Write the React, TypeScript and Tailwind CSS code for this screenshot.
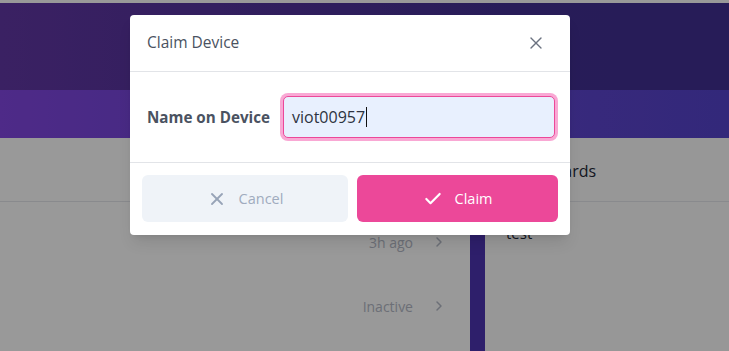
import { X, Check, ChevronRight } from "lucide-react";

function Backdrop() {
  return (
    <div className="flex flex-col w-full h-full bg-[#4d34b2]">
      <div className="h-[3px] bg-white" />
      <div className="h-[87px] bg-[linear-gradient(90deg,#6237a5_0%,#55349e_30%,#433093_70%,#413093_100%)]" />
      <div className="h-[48px] bg-[linear-gradient(90deg,#8246e3_0%,#6e47d6_40%,#5544cc_100%)]" />
      <div className="flex flex-1 gap-[15px]">
        <div className="w-[470px] bg-white flex flex-col">
          <div className="h-[64px] border-b border-[#e5e7eb]" />
          <div className="flex items-center justify-end h-[80px] pr-[23px] gap-[18px] text-[14px] text-[#b4b9c6]">
            <span>3h ago</span>
            <ChevronRight size={16} strokeWidth={2.2} />
          </div>
          <div className="flex items-center justify-end h-[48px] pr-[23px] gap-[18px] text-[14px] text-[#b4b9c6]">
            <span>Inactive</span>
            <ChevronRight size={16} strokeWidth={2.2} />
          </div>
        </div>
        <div className="flex-1 bg-[#fcfcfc] flex flex-col">
          <div className="h-[64px] border-b border-[#e5e7eb] flex items-center pl-[21px] text-[16px] text-[#1f2937] pt-[3px]">
            Dashboards
          </div>
          <div className="pl-[21px] pt-[20px] text-[15px] text-[#1f2937]">test</div>
        </div>
      </div>
    </div>
  );
}

export default function App() {
  return (
    <div
      className="relative w-[729px] h-[351px] overflow-hidden"
      style={{ fontFamily: '"Open Sans", "Noto Sans", sans-serif' }}
    >
      <Backdrop />
      <div className="absolute inset-0 bg-black/40" />
      <div className="absolute left-[130px] top-[15px] w-[440px] bg-white rounded-[4px] shadow-lg flex flex-col">
        <div className="h-[57px] flex items-center justify-between pl-[17px] pr-[24px] border-b border-[#e2e4e8]">
          <span className="text-[15.5px] font-medium text-[#4a5261]">Claim Device</span>
          <X size={20} strokeWidth={1.6} className="text-[#6b7280]" />
        </div>
        <div className="h-[91px] flex items-center pl-[17px] pr-[15px] gap-[13px] border-b border-[#e2e4e8]">
          <label className="text-[15.2px] font-bold text-[#4a5261] whitespace-nowrap">Name on Device</label>
          <div className="flex-1 h-[42px] rounded-[5px] border border-[#ec4899] bg-[#e8f0fe] ring-[3px] ring-[#f9a8d4] flex items-center pl-[8px] text-[16px] text-[#2d3340]">
            viot00957
            <span className="w-px h-[20px] bg-[#111] ml-[1px]" />
          </div>
        </div>
        <div className="flex gap-[9px] pt-[12px] pb-[13px] px-[12px]">
          <div className="w-[206px] h-[47px] rounded-[6px] bg-[#eff3f8] flex items-center justify-center gap-[12px] text-[14.5px] text-[#a0abbe]">
            <X size={20} strokeWidth={2.2} className="text-[#97a3b7]" />
            <span>Cancel</span>
          </div>
          <div className="flex-1 h-[47px] rounded-[6px] bg-[#ec4899] flex items-center justify-center gap-[12px] text-[14.5px] text-white">
            <Check size={20} strokeWidth={2.6} />
            <span>Claim</span>
          </div>
        </div>
      </div>
    </div>
  );
}
